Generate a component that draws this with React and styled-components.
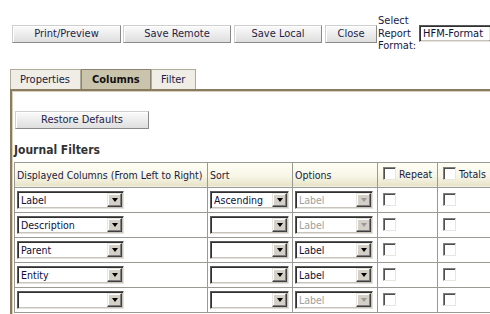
import React from "react";
import styled, { createGlobalStyle, css } from "styled-components";

const Global = createGlobalStyle`
  html, body { margin: 0; padding: 0; overflow: hidden; background: #fff; }
  body { font-family: "DejaVu Sans Condensed", "DejaVu Sans", sans-serif; font-size: 11px; color: #1a1a40; }
`;

const Page = styled.div`
  width: 490px;
  height: 314px;
  overflow: hidden;
`;

const Toolbar = styled.div`
  display: flex;
  align-items: center;
  padding: 15px 0 0 12px;
  white-space: nowrap;
  & > * { flex-shrink: 0; }
`;

const Button = styled.button`
  box-sizing: border-box;
  height: 18px;
  width: ${(p) => p.$w}px;
  margin-left: ${(p) => p.$ml || 0}px;
  padding: 0;
  font: inherit;
  font-size: 11px;
  color: #1e1e48;
  background: linear-gradient(#fbfbfb 0%, #eeeeee 45%, #dedede 100%);
  border: 1px solid;
  border-color: #cfcfcf #8a8a8a #8a8a8a #cfcfcf;
  box-shadow: inset 1px 1px 0 #ffffff;
  cursor: default;
`;

const FormatLabel = styled.div`
  margin-left: 1px;
  width: 41px;
  line-height: 12.5px;
  white-space: normal;
  font-size: 11px;
`;

const Tabs = styled.div`
  display: flex;
  margin: 16px 0 0 10px;
  height: 20px;
`;

const Tab = styled.div`
  box-sizing: border-box;
  width: ${(p) => p.$w}px;
  height: 20px;
  padding-left: ${(p) => p.$pl}px;
  line-height: 19px;
  font-size: 11px;
  border: 1px solid #b0aa98;
  border-bottom: none;
  background: #efede5;
  color: #1a1a40;
  ${(p) =>
    p.$active &&
    css`
      background: #cbc4ad;
      border-color: #8c8470;
      font-weight: bold;
      color: #111;
    `}
`;

const Panel = styled.div`
  margin-left: 10px;
  border-top: 2px solid #8a7c60;
  border-left: 2px solid #8a7c60;
  box-shadow: inset 1px 1px 0 #d8d0bc;
  padding: 20px 0 0 2px;
  height: 300px;
`;

const HeadRow = styled.div`
  display: flex;
  padding-left: 1px;
`;

const Heading = styled.div`
  margin: 13px 0 0 0;
  font-weight: bold;
  font-size: 12px;
  line-height: 16px;
  color: #333;
`;

const Grid = styled.table`
  margin-top: 4px;
  border-collapse: collapse;
  table-layout: fixed;
  width: 484px;
`;

const Th = styled.th`
  height: 24px;
  padding: 0 0 0 2px;
  text-align: left;
  font-weight: normal;
  font-size: 10.5px;
  color: #1a1a40;
  white-space: nowrap;
  overflow: hidden;
  border: 1px solid #9a9a94;
  background: linear-gradient(#fffff6 0%, #f8f6e6 55%, #e6e2c8 100%);
  vertical-align: middle;
`;

const Td = styled.td`
  height: 24px;
  padding: 0 0 0 2px;
  border: 1px solid #9a9a94;
  vertical-align: middle;
`;

const SelectBox = styled.div`
  box-sizing: border-box;
  width: ${(p) => p.$w}px;
  height: ${(p) => p.$h || 18}px;
  margin-left: ${(p) => p.$ml || 0}px;
  display: flex;
  align-items: center;
  border: 1px solid;
  border-color: #5a5a5a #e4e2dc #e4e2dc #5a5a5a;
  box-shadow: inset 1px 1px 0 #303030, inset -1px -1px 0 #c8c4bc;
  background: #fff;
  padding: 1px 1px 1px 3px;
`;

const SelectText = styled.span`
  flex: 1;
  font-size: ${(p) => p.$fs || 10.5}px;
  line-height: 14px;
  color: ${(p) => (p.$disabled ? "#a0a0a0" : "#10103a")};
  overflow: hidden;
  white-space: nowrap;
`;

const ArrowBtn = styled.div`
  box-sizing: border-box;
  flex-shrink: 0;
  width: 15px;
  height: 14px;
  background: #d4d0c8;
  border: 1px solid;
  border-color: #e8e6e0 #404040 #404040 #e8e6e0;
  box-shadow: inset -1px -1px 0 #808080, inset 1px 1px 0 #fff;
  display: flex;
  align-items: center;
  justify-content: center;
  &::after {
    content: "";
    width: 0;
    height: 0;
    border-left: 3.5px solid transparent;
    border-right: 3.5px solid transparent;
    border-top: 4px solid ${(p) => (p.$disabled ? "#9a9a9a" : "#000")};
    margin-top: 1px;
  }
`;

const Check = styled.span`
  display: inline-block;
  box-sizing: border-box;
  width: 13px;
  height: 13px;
  margin-left: 3px;
  vertical-align: middle;
  background: #fff;
  border: 1px solid;
  border-color: #808080 #e8e6e0 #e8e6e0 #808080;
  box-shadow: inset 1px 1px 0 #505050;
`;

const CheckLabel = styled.span`
  display: inline-flex;
  align-items: center;
  gap: 3px;
`;

function Select({ w, h, ml, fs, value, disabled }) {
  return (
    <SelectBox $w={w} $h={h} $ml={ml}>
      <SelectText $disabled={disabled} $fs={fs}>{value}</SelectText>
      <ArrowBtn $disabled={disabled} />
    </SelectBox>
  );
}

const rows = [
  { col: "Label", sort: "Ascending", optDisabled: true },
  { col: "Description", sort: "", optDisabled: true },
  { col: "Parent", sort: "", optDisabled: false },
  { col: "Entity", sort: "", optDisabled: false },
  { col: "", sort: "", optDisabled: true },
];

export default function App() {
  return (
    <Page>
      <Global />
      <Toolbar>
        <Button $w={109}>Print/Preview</Button>
        <Button $w={108} $ml={2}>Save Remote</Button>
        <Button $w={88} $ml={3}>Save Local</Button>
        <Button $w={52} $ml={3}>Close</Button>
        <FormatLabel>Select Report Format:</FormatLabel>
        <Select w={87} h={17} ml={0} fs={11} value="HFM-Format" />
      </Toolbar>
      <Tabs>
        <Tab $w={71} $pl={9}>Properties</Tab>
        <Tab $w={70} $pl={10} $active>Columns</Tab>
        <Tab $w={45} $pl={9}>Filter</Tab>
      </Tabs>
      <Panel>
        <HeadRow>
          <Button $w={134}>Restore Defaults</Button>
        </HeadRow>
        <Heading>Journal Filters</Heading>
        <Grid>
          <colgroup>
            <col style={{ width: 193 }} />
            <col style={{ width: 85 }} />
            <col style={{ width: 85 }} />
            <col style={{ width: 60 }} />
            <col style={{ width: 61 }} />
          </colgroup>
          <thead>
            <tr>
              <Th>Displayed Columns (From Left to Right)</Th>
              <Th>Sort</Th>
              <Th>Options</Th>
              <Th>
                <CheckLabel>
                  <Check />
                  Repeat
                </CheckLabel>
              </Th>
              <Th>
                <CheckLabel>
                  <Check />
                  Totals
                </CheckLabel>
              </Th>
            </tr>
          </thead>
          <tbody>
            {rows.map((r, i) => (
              <tr key={i}>
                <Td>
                  <Select w={107} value={r.col} />
                </Td>
                <Td>
                  <Select w={79} value={r.sort} />
                </Td>
                <Td>
                  <Select w={78} value="Label" disabled={r.optDisabled} />
                </Td>
                <Td>
                  <Check />
                </Td>
                <Td>
                  <Check />
                </Td>
              </tr>
            ))}
          </tbody>
        </Grid>
      </Panel>
    </Page>
  );
}
